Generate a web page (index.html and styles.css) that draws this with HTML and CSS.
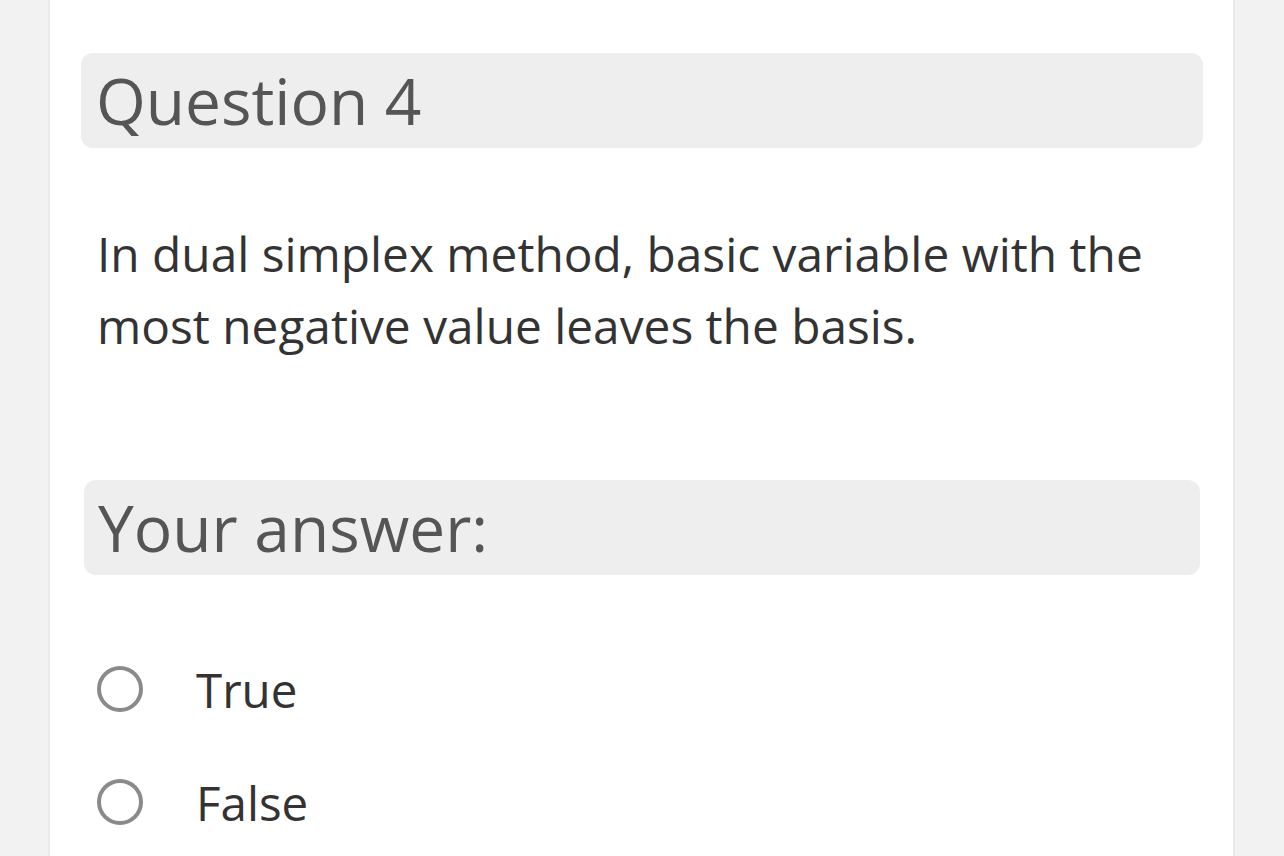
FILE: index.html
```html
<!DOCTYPE html>
<html>
<head>
<meta charset="utf-8">
<link rel="stylesheet" href="styles.css">
</head>
<body>
<div class="card">
  <div class="box q-head">Question 4</div>
  <div class="q-text">In dual simplex method, basic variable with the most negative value leaves the basis.</div>
  <div class="box answer-head">Your answer:</div>
  <div class="options">
    <label class="option"><span class="radio"></span><span class="opt-label">True</span></label>
    <label class="option"><span class="radio"></span><span class="opt-label">False</span></label>
  </div>
</div>
</body>
</html>
```
FILE: styles.css
```css
html, body {
  margin: 0;
  padding: 0;
  background: #f2f2f2;
  font-family: "Open Sans", "Liberation Sans", sans-serif;
}
.card {
  margin-left: 48px;
  width: 1187px;
  min-height: 856px;
  box-sizing: border-box;
  background: #fff;
  border-left: 2px solid #e9e9e9;
  border-right: 2px solid #e9e9e9;
  padding: 53px 30px 0 31px;
}
.box {
  background: #eeeeee;
  border-radius: 12px;
  height: 95px;
  display: flex;
  align-items: center;
  color: #555;
  font-size: 64px;
  line-height: 95px;
}
.q-head {
  padding-left: 15px;
}
.q-text {
  margin-top: 70px;
  padding-left: 16px;
  font-size: 47.8px;
  line-height: 72px;
  color: #333;
}
.answer-head {
  margin: 118px 3px 0 3px;
  padding-left: 14px;
}
.options {
  margin-top: 91px;
  display: flex;
  flex-direction: column;
  gap: 67px;
}
.option {
  display: flex;
  align-items: center;
  height: 46px;
  padding-left: 16px;
}
.radio {
  width: 46px;
  height: 46px;
  box-sizing: border-box;
  border: 4px solid #8a8a8a;
  border-radius: 50%;
  flex: none;
}
.opt-label {
  margin-left: 53px;
  font-size: 47.5px;
  color: #333;
}
```
